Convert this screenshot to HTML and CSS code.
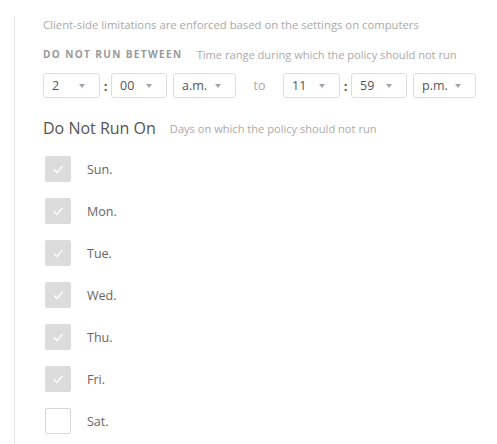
FILE: index.html
```html
<!DOCTYPE html>
<html lang="en">

<head>
    <meta charset="UTF-8">
    <meta name="viewport" content="width=device-width, initial-scale=1.0">
    <title>Policy limitations</title>
    <link rel="stylesheet" href="styles.css">
</head>

<body>
    <div class="panel">
        <p class="note">Client-side limitations are enforced based on the settings on computers</p>

        <div class="label-row">
            <span class="caps">Do not run between</span>
            <span class="hint">Time range during which the policy should not run</span>
        </div>

        <div class="time-row">
            <div class="select w-hour">2 <span class="arrow"></span></div>
            <span class="colon">:</span>
            <div class="select w-min">00 <span class="arrow"></span></div>
            <div class="select w-ampm">a.m. <span class="arrow"></span></div>
            <span class="to">to</span>
            <div class="select w-hour">11 <span class="arrow"></span></div>
            <span class="colon">:</span>
            <div class="select w-min">59 <span class="arrow"></span></div>
            <div class="select w-ampm">p.m. <span class="arrow"></span></div>
        </div>

        <div class="heading-row">
            <span class="heading">Do Not Run On</span>
            <span class="hint">Days on which the policy should not run</span>
        </div>

        <ul class="days">
            <li><span class="box checked"><svg viewBox="0 0 26 26" width="26" height="26"><path d="M9 13.5l3 3 5.5-6.5" fill="none" stroke="#fff" stroke-width="1.3"/></svg></span>Sun.</li>
            <li><span class="box checked"><svg viewBox="0 0 26 26" width="26" height="26"><path d="M9 13.5l3 3 5.5-6.5" fill="none" stroke="#fff" stroke-width="1.3"/></svg></span>Mon.</li>
            <li><span class="box checked"><svg viewBox="0 0 26 26" width="26" height="26"><path d="M9 13.5l3 3 5.5-6.5" fill="none" stroke="#fff" stroke-width="1.3"/></svg></span>Tue.</li>
            <li><span class="box checked"><svg viewBox="0 0 26 26" width="26" height="26"><path d="M9 13.5l3 3 5.5-6.5" fill="none" stroke="#fff" stroke-width="1.3"/></svg></span>Wed.</li>
            <li><span class="box checked"><svg viewBox="0 0 26 26" width="26" height="26"><path d="M9 13.5l3 3 5.5-6.5" fill="none" stroke="#fff" stroke-width="1.3"/></svg></span>Thu.</li>
            <li><span class="box checked"><svg viewBox="0 0 26 26" width="26" height="26"><path d="M9 13.5l3 3 5.5-6.5" fill="none" stroke="#fff" stroke-width="1.3"/></svg></span>Fri.</li>
            <li><span class="box"></span>Sat.</li>
        </ul>
    </div>
</body>

</html>
```

FILE: styles.css
```css
body {
    font-family: "Open Sans", "Liberation Sans", sans-serif;
    margin: 0;
    background: #fff;
    color: #555;
}

.panel {
    margin: 16px 0 0 14px;
    padding: 1px 0 0 28px;
    border-left: 1px solid #e6e6ee;
    min-height: 440px;
}

.note {
    margin: 1px 0 0;
    font-size: 11.3px;
    line-height: 14px;
    color: #a9a9a9;
}

.label-row {
    display: flex;
    align-items: center;
    margin-top: 15px;
    height: 14px;
}

.caps {
    font-size: 10px;
    font-weight: 700;
    letter-spacing: 1.4px;
    text-transform: uppercase;
    color: #999;
    margin-right: 14px;
}

.hint {
    font-size: 11.1px;
    color: #aaa;
}

.time-row {
    display: flex;
    align-items: center;
    margin-top: 12px;
}

.select {
    box-sizing: border-box;
    height: 25px;
    border: 1px solid #ddd;
    border-radius: 3px;
    padding: 0 0 0 8px;
    font-size: 12.5px;
    color: #555;
    display: flex;
    align-items: center;
    position: relative;
}

.w-hour { width: 57px; }
.w-min { width: 56px; }
.w-ampm { width: 63px; margin-left: 6px; }

.arrow {
    position: absolute;
    right: 14px;
    top: 10px;
    border-left: 3.5px solid transparent;
    border-right: 3.5px solid transparent;
    border-top: 4px solid #a0a4ae;
}

.colon {
    width: 11px;
    text-align: center;
    font-weight: 700;
    font-size: 13px;
    color: #555;
}

.to {
    width: 47px;
    text-align: center;
    font-size: 12.5px;
    color: #aaa;
}

.heading-row {
    display: flex;
    align-items: center;
    margin-top: 19px;
    height: 22px;
}

.heading {
    font-size: 16px;
    color: #555;
    margin-right: 14px;
}

.days {
    list-style: none;
    margin: 17px 0 0 2px;
    padding: 0;
}

.days li {
    display: flex;
    align-items: center;
    height: 26px;
    margin-bottom: 16px;
    font-size: 12.5px;
    color: #666;
}

.box {
    box-sizing: border-box;
    width: 26px;
    height: 26px;
    border: 1px solid #d6d6d6;
    border-radius: 2px;
    margin-right: 16px;
    background: #fff;
}

.box.checked {
    background: #dcdcdc;
    border-color: #dcdcdc;
}

.box svg {
    display: block;
    margin: -1px;
}
```
